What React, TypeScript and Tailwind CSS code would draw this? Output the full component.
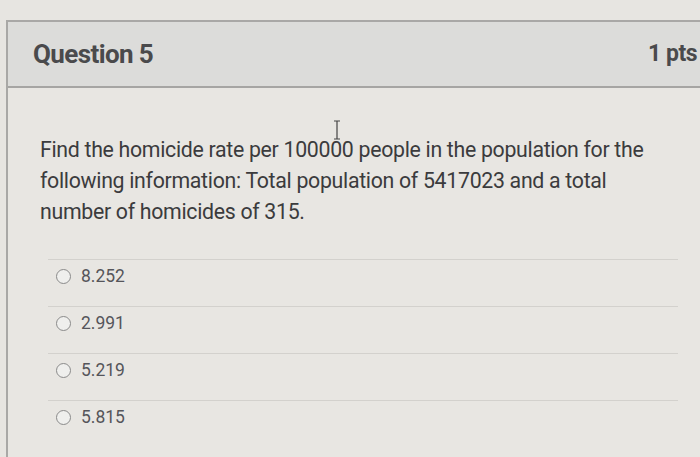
import React from "react";

const options = ["8.252", "2.991", "5.219", "5.815"];

function Radio() {
  return (
    <span className="inline-block w-[15px] h-[15px] rounded-full border-[1.5px] border-[#8a8a8a] bg-[#efefed] flex-shrink-0" />
  );
}

export default function App() {
  return (
    <div
      className="w-[700px] h-[457px] overflow-hidden bg-[#e7e5e1] pt-[20px] pl-[6px]"
      style={{ fontFamily: "Roboto, 'Liberation Sans', sans-serif" }}
    >
      <div className="h-full border-l-2 border-t-2 border-[#a9a8a6] bg-[#e8e6e2]">
        {/* Header */}
        <div className="h-[66px] flex items-center justify-between pl-[25px] pr-[3px] bg-[#dcdcda] border-b-2 border-[#a6a5a3]">
          <span className="text-[26px] font-bold text-[#4a4a4c] tracking-[-0.6px]">Question 5</span>
          <span className="text-[23px] font-bold text-[#4a4a4c] tracking-[-0.5px]">1 pts</span>
        </div>

        {/* Body */}
        <div className="pl-[32px] pr-[30px] pt-[46px]">
          <p className="relative w-[630px] text-[21.3px] leading-[31px] text-[#3b3b3d] tracking-[-0.3px]">
            Find the homicide rate per 100000 people in the population for the following information: Total population of 5417023 and a total number of homicides of 315.
            <svg
              className="absolute left-[292px] -top-[14px]"
              width="10"
              height="20"
              viewBox="0 0 10 20"
              fill="none"
              stroke="#444"
              strokeWidth="1.2"
            >
              <path d="M2 1h6M5 1v18M2 19h6" />
            </svg>
          </p>

          <div className="mt-[32px] mr-[-8px] ml-[8px]">
            {options.map((o) => (
              <div
                key={o}
                className="pt-[4px] pb-[18px] flex items-center gap-[10px] pl-[8px] border-t border-[#d3d1cd] text-[17.5px] text-[#55555a]"
              >
                <Radio />
                <span className="h-[24px] leading-[24px]">{o}</span>
              </div>
            ))}
          </div>
        </div>
      </div>
    </div>
  );
}
